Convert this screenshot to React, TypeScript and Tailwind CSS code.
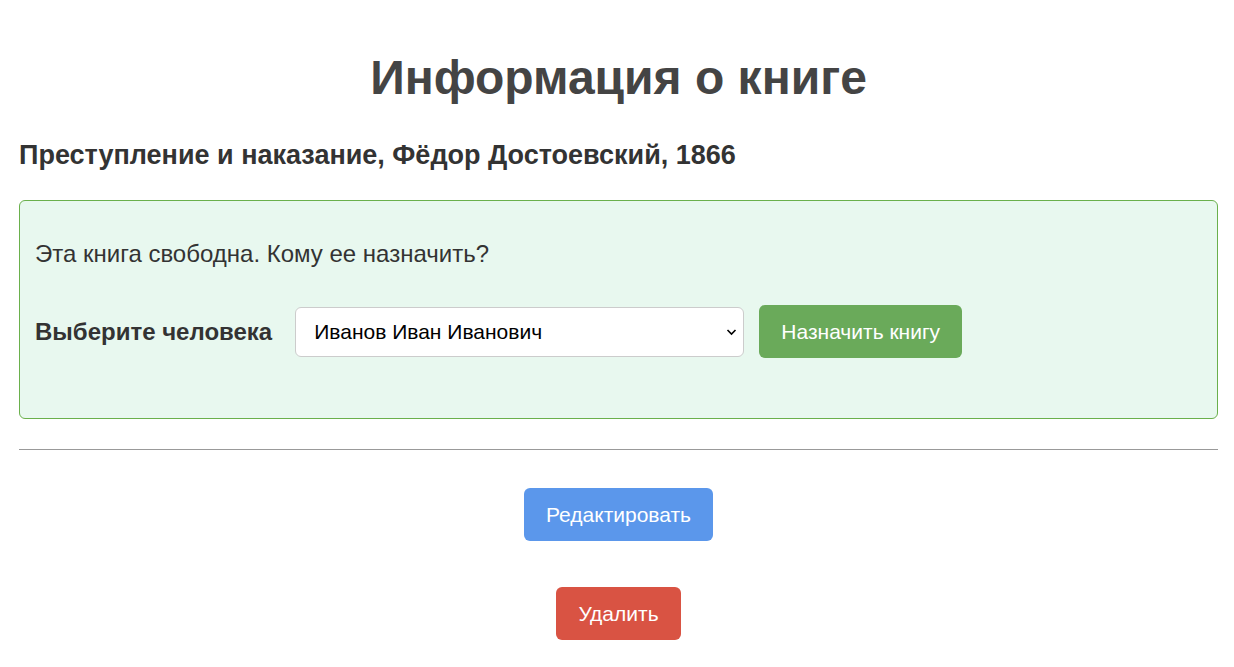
export default function App() {
  return (
    <div className="min-h-screen bg-white pl-[19px] pr-[16px] pt-[48px] font-['Liberation_Sans',Arial,sans-serif] text-[#333]">
      <h1 className="text-center text-[48px] font-bold leading-[60px] text-[#444]">Информация о книге</h1>
      <h2 className="mt-[31px] text-[27px] font-bold leading-[32px] text-[#333]">
        Преступление и наказание, Фёдор Достоевский, 1866
      </h2>

      <div className="mt-[29px] rounded-[6px] border border-[#6ab04c] bg-[#e8f8ef] px-[15px] pt-[39px] pb-[60px]">
        <p className="text-[24px] leading-[28px] text-[#333]">Эта книга свободна. Кому ее назначить?</p>
        <div className="mt-[37px] flex items-center">
          <label className="text-[24px] font-bold text-[#333]">Выберите человека</label>
          <div className="relative ml-[23px]">
            <select className="h-[50px] w-[449px] appearance-none rounded-[6px] border border-[#ccc] bg-white pl-[18px] text-[21px] text-black">
              <option>Иванов Иван Иванович</option>
            </select>
            <svg className="pointer-events-none absolute right-[7px] top-[20px]" width="11" height="10" viewBox="0 0 11 10">
              <path d="M1.5 3 L5.5 7 L9.5 3" fill="none" stroke="#000" strokeWidth="1.6" />
            </svg>
          </div>
          <button className="ml-[15px] h-[53px] w-[203px] rounded-[6px] bg-[#6aaa5a] text-[21px] text-white">
            Назначить книгу
          </button>
        </div>
      </div>

      <hr className="mt-[30px] border-t border-[#999]" />

      <div className="mt-[38px] flex flex-col items-center gap-[46px]">
        <button className="h-[53px] w-[189px] rounded-[6px] bg-[#5b97eb] text-[21px] text-white">Редактировать</button>
        <button className="h-[53px] w-[125px] rounded-[6px] bg-[#d95343] text-[21px] text-white">Удалить</button>
      </div>
    </div>
  );
}
